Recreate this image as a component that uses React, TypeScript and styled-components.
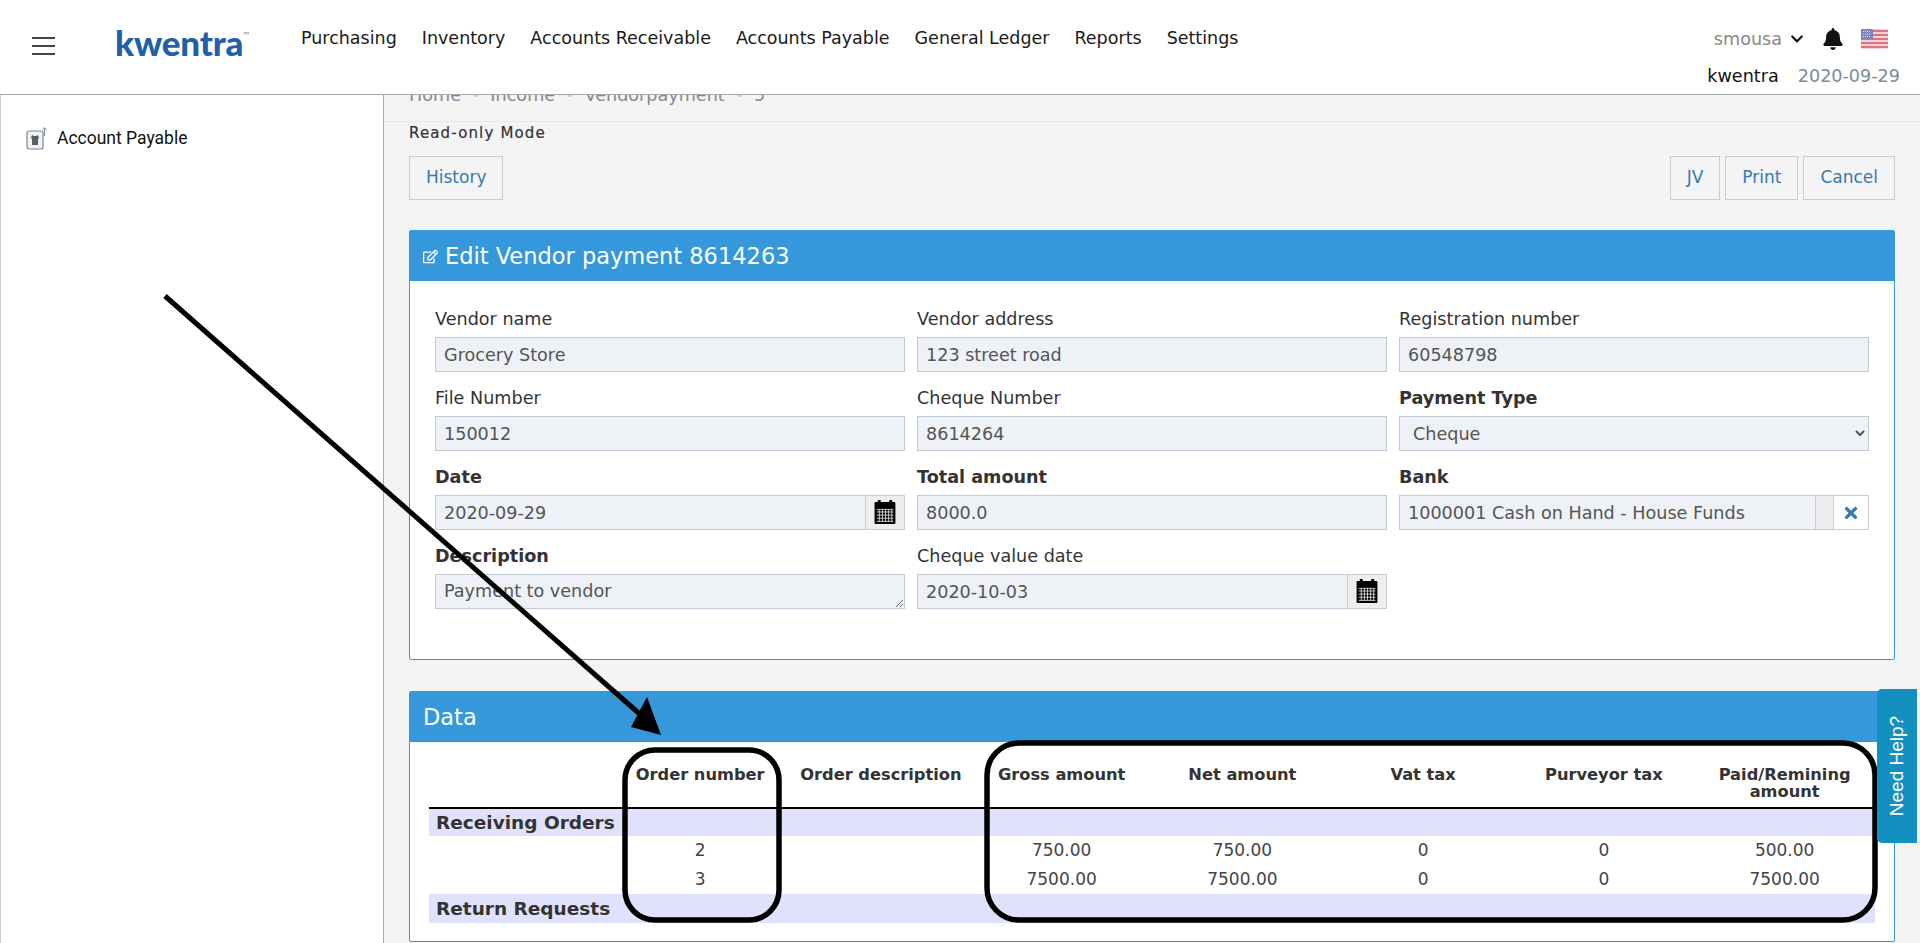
import styled, { createGlobalStyle } from 'styled-components';
import { FaBell, FaChevronDown, FaRegEdit, FaTimes } from 'react-icons/fa';

const NAV_ITEMS = [
  'Purchasing',
  'Inventory',
  'Accounts Receivable',
  'Accounts Payable',
  'General Ledger',
  'Reports',
  'Settings',
];

const COLUMNS = [
  '',
  'Order number',
  'Order description',
  'Gross amount',
  'Net amount',
  'Vat tax',
  'Purveyor tax',
  'Paid/Remining amount',
];

const ORDERS = [
  ['', '2', '', '750.00', '750.00', '0', '0', '500.00'],
  ['', '3', '', '7500.00', '7500.00', '0', '0', '7500.00'],
];

function CalendarIcon() {
  return (
    <svg width="22" height="25" viewBox="0 0 20 24" fill="#000">
      <rect x="0" y="2" width="20" height="21" rx="1" />
      <rect x="3" y="0" width="3" height="4" rx="1" />
      <rect x="14" y="0" width="3" height="4" rx="1" />
      <path
        d="M2 11.5h16M2 14.5h16M2 17.5h16M4.5 9v12M7.5 9v12M10.5 9v12M13.5 9v12M16.5 9v12M2 9h16M2 20.5h16"
        stroke="#e4e4e4"
        strokeWidth="0.8"
      />
    </svg>
  );
}

function PayableIcon() {
  return (
    <svg width="21" height="24" viewBox="0 0 21 24" fill="none">
      <rect x="1" y="5" width="16" height="18" rx="2" fill="#f2f3f6" stroke="#7b8494" strokeWidth="1.2" />
      <path d="M6 9l2 1h2l2-1 1 3-1 1v6H6v-6l-1-1z" fill="#565d6b" />
      <path d="M18.5 10V2M16.5 4l2-2.5L20.5 4" stroke="#8c93a0" strokeWidth="1" />
    </svg>
  );
}

function FlagIcon() {
  return (
    <svg width="27" height="20" viewBox="0 0 27 20">
      <rect width="27" height="20" rx="2" fill="#f3d4d6" />
      <path d="M0 2h27M0 6h27M0 10h27M0 14h27M0 18h27" stroke="#d9747c" strokeWidth="2" />
      <rect width="12" height="10" rx="1" fill="#7f86bd" />
      <path d="M2 2.5h8M2 5h8M2 7.5h8" stroke="#d6d8ec" strokeWidth="1" strokeDasharray="1 1" />
    </svg>
  );
}

function Annotations() {
  return (
    <Overlay width="1920" height="943" viewBox="0 0 1920 943">
      <line x1="165" y1="296" x2="642" y2="716" stroke="#000" strokeWidth="5" />
      <polygon points="661,735 631,727 647,697" fill="#000" />
      <rect x="625" y="750" width="154" height="170" rx="30" fill="none" stroke="#000" strokeWidth="5.5" />
      <rect x="987" y="743" width="888" height="177" rx="32" fill="none" stroke="#000" strokeWidth="5.5" />
    </Overlay>
  );
}

function Field(props: { label: string; strong?: boolean; children: React.ReactNode }) {
  return (
    <FieldBox>
      <FieldLabel $strong={props.strong}>{props.label}</FieldLabel>
      {props.children}
    </FieldBox>
  );
}

function App() {
  return (
    <Page>
      <GlobalStyle />
      <Header>
        <Burger>
          <span />
          <span />
          <span />
        </Burger>
        <Logo>
          kwentra<sup>™</sup>
        </Logo>
        <Nav>
          {NAV_ITEMS.map((item) => (
            <NavLink key={item}>{item}</NavLink>
          ))}
        </Nav>
        <UserArea>
          <UserRow>
            <UserName>smousa</UserName>
            <Chevron>
              <FaChevronDown size={14} />
            </Chevron>
            <Bell>
              <FaBell size={22} />
            </Bell>
            <FlagIcon />
          </UserRow>
          <CompanyRow>
            <Company>kwentra</Company>
            <DateText>2020-09-29</DateText>
          </CompanyRow>
        </UserArea>
      </Header>
      <Body>
        <Sidebar>
          <SideItem>
            <PayableIcon />
            <span>Account Payable</span>
          </SideItem>
        </Sidebar>
        <Main>
          <Breadcrumb>
            <span>Home</span>
            <Dot>•</Dot>
            <span>Income</span>
            <Dot>•</Dot>
            <span>Vendorpayment</span>
            <Dot>•</Dot>
            <span>5</span>
          </Breadcrumb>
          <Content>
            <ReadOnly>Read-only Mode</ReadOnly>
            <Toolbar>
              <LinkButton>History</LinkButton>
              <ToolbarRight>
                <LinkButton>JV</LinkButton>
                <LinkButton>Print</LinkButton>
                <LinkButton>Cancel</LinkButton>
              </ToolbarRight>
            </Toolbar>
            <Panel>
              <PanelHeading>
                <FaRegEdit size={15} />
                Edit Vendor payment 8614263
              </PanelHeading>
              <FormGrid>
                <Field label="Vendor name">
                  <TextInput readOnly value="Grocery Store" />
                </Field>
                <Field label="Vendor address">
                  <TextInput readOnly value="123 street road" />
                </Field>
                <Field label="Registration number">
                  <TextInput readOnly value="60548798" />
                </Field>
                <Field label="File Number">
                  <TextInput readOnly value="150012" />
                </Field>
                <Field label="Cheque Number">
                  <TextInput readOnly value="8614264" />
                </Field>
                <Field label="Payment Type" strong>
                  <SelectInput defaultValue="Cheque">
                    <option>Cheque</option>
                  </SelectInput>
                </Field>
                <Field label="Date" strong>
                  <InputGroup>
                    <TextInput readOnly value="2020-09-29" />
                    <Addon>
                      <CalendarIcon />
                    </Addon>
                  </InputGroup>
                </Field>
                <Field label="Total amount" strong>
                  <TextInput readOnly value="8000.0" />
                </Field>
                <Field label="Bank" strong>
                  <InputGroup>
                    <TextInput readOnly value="1000001 Cash on Hand - House Funds" />
                    <BankSpacer />
                    <ClearAddon>
                      <FaTimes size={18} />
                    </ClearAddon>
                  </InputGroup>
                </Field>
                <Field label="Description" strong>
                  <TextArea readOnly defaultValue="Payment to vendor" />
                </Field>
                <Field label="Cheque value date">
                  <InputGroup>
                    <TextInput readOnly value="2020-10-03" />
                    <Addon>
                      <CalendarIcon />
                    </Addon>
                  </InputGroup>
                </Field>
              </FormGrid>
            </Panel>
            <DataPanel>
              <PanelHeading>Data</PanelHeading>
              <TableWrap>
                <DataTable>
                  <thead>
                    <tr>
                      {COLUMNS.map((col, i) => (
                        <th key={i}>{col}</th>
                      ))}
                    </tr>
                  </thead>
                  <tbody>
                    <SectionRow>
                      <td colSpan={8}>Receiving Orders</td>
                    </SectionRow>
                    {ORDERS.map((row) => (
                      <tr key={row[1]}>
                        {row.map((cell, i) => (
                          <td key={i}>{cell}</td>
                        ))}
                      </tr>
                    ))}
                    <SectionRow>
                      <td colSpan={8}>Return Requests</td>
                    </SectionRow>
                  </tbody>
                </DataTable>
              </TableWrap>
            </DataPanel>
          </Content>
        </Main>
      </Body>
      <Annotations />
      <HelpTab>
        <span>Need Help?</span>
      </HelpTab>
    </Page>
  );
}

var GlobalStyle = createGlobalStyle`
  html, body {
    margin: 0;
    padding: 0;
    overflow: hidden;
  }
  * {
    box-sizing: border-box;
  }
  body {
    font-family: "DejaVu Sans", sans-serif;
    font-size: 17.6px;
    color: #333;
    background: #f4f4f4;
  }
`;

var Page = styled.div`
  position: relative;
  width: 1920px;
  height: 943px;
  overflow: hidden;
`;

var Overlay = styled.svg`
  position: absolute;
  top: 0;
  left: 0;
  pointer-events: none;
`;

var Header = styled.header`
  display: flex;
  align-items: flex-start;
  height: 95px;
  background: #fff;
  border-bottom: 1px solid #aaa;
  position: relative;
  z-index: 1;
`;

var Burger = styled.div`
  display: flex;
  flex-direction: column;
  gap: 6px;
  width: 23px;
  margin: 37px 0 0 32px;
  span {
    display: block;
    height: 2px;
    background: #444;
  }
`;

var Logo = styled.div`
  width: 186px;
  margin: 22px 0 0 60px;
  font-family: Lato, sans-serif;
  font-weight: 900;
  font-size: 35px;
  line-height: 40px;
  letter-spacing: -0.2px;
  color: #2060a8;
  sup {
    font-size: 8px;
    font-weight: 400;
    color: #889;
    vertical-align: 18px;
    line-height: 0;
  }
`;

var Nav = styled.nav`
  display: flex;
  gap: 25px;
  margin-top: 28px;
`;

var NavLink = styled.a`
  font-size: 17.5px;
  line-height: 20px;
  color: #1a1a1a;
`;

var UserArea = styled.div`
  margin-left: auto;
  padding: 26px 20px 0 0;
  display: flex;
  flex-direction: column;
  align-items: flex-end;
`;

var UserRow = styled.div`
  display: flex;
  align-items: center;
  height: 26px;
  padding-right: 12px;
`;

var UserName = styled.span`
  color: #888;
  margin-right: 8px;
`;

var Chevron = styled.span`
  display: flex;
  color: #111;
  margin-right: 18px;
`;

var Bell = styled.span`
  display: flex;
  color: #111;
  margin-right: 17px;
`;

var CompanyRow = styled.div`
  display: flex;
  gap: 19px;
  margin-top: 14px;
  line-height: 20px;
`;

var Company = styled.span`
  color: #111;
`;

var DateText = styled.span`
  color: #7d8c99;
`;

var Body = styled.div`
  display: flex;
  height: 848px;
`;

var Sidebar = styled.aside`
  width: 384px;
  flex: none;
  background: #fff;
  border-right: 1px solid #aaa;
  border-left: 1px solid #ccc;
  padding: 31px 0 0 25px;
`;

var SideItem = styled.div`
  display: flex;
  align-items: center;
  gap: 10px;
  font-family: Roboto, sans-serif;
  font-size: 17.5px;
  color: #111;
`;

var Main = styled.main`
  flex: 1;
  min-width: 0;
  overflow: hidden;
`;

var Breadcrumb = styled.div`
  display: flex;
  gap: 9.5px;
  height: 37px;
  margin-top: -10px;
  padding-left: 25px;
  border-bottom: 1px solid #e8e8ee;
  line-height: 20px;
  color: #888;
`;

var Dot = styled.span`
  color: #ccc;
`;

var Content = styled.div`
  padding: 0 25px 0 25px;
`;

var ReadOnly = styled.div`
  margin-top: 2px;
  font-size: 15px;
  line-height: 18px;
  letter-spacing: 1.15px;
  -webkit-text-stroke: 0.2px #333;
`;

var Toolbar = styled.div`
  display: flex;
  justify-content: space-between;
  margin-top: 14px;
`;

var ToolbarRight = styled.div`
  display: flex;
  gap: 5px;
`;

var LinkButton = styled.button`
  height: 44px;
  padding: 0 16px 2px;
  background: transparent;
  border: 1px solid #ccc;
  font-family: inherit;
  font-size: 17px;
  color: #337ab7;
`;

var Panel = styled.section`
  margin-top: 30px;
  background: #fff;
  border: 1px solid #3498db;
  border-radius: 2px;
  height: 430px;
`;

var DataPanel = styled(Panel)`
  height: 251px;
  margin-top: 31px;
`;

var PanelHeading = styled.h3`
  display: flex;
  align-items: center;
  gap: 7px;
  height: 50px;
  margin: 0;
  padding: 0 13px;
  background: #3498db;
  color: #fff;
  font-size: 22.5px;
  font-weight: 400;
`;

var FormGrid = styled.div`
  display: grid;
  grid-template-columns: repeat(3, 470px);
  column-gap: 12px;
  row-gap: 17px;
  padding: 29px 25px 0;
`;

var FieldBox = styled.div`
  display: flex;
  flex-direction: column;
  min-width: 0;
`;

var FieldLabel = styled.label<{ $strong?: boolean }>`
  height: 27px;
  padding-bottom: 9px;
  line-height: 18px;
  font-weight: ${(p) => (p.$strong ? 700 : 400)};
  color: #333;
`;

var TextInput = styled.input`
  flex: none;
  width: 100%;
  min-width: 0;
  height: 35px;
  padding: 0 8px;
  background: #eef1f5;
  border: 1px solid #c2cad8;
  font-family: inherit;
  font-size: 17.6px;
  color: #555;
  outline: none;
`;

var SelectInput = styled.select`
  width: 100%;
  height: 35px;
  padding: 0 9px;
  background: #eef1f5;
  border: 1px solid #c2cad8;
  font-family: inherit;
  font-size: 17.6px;
  color: #555;
`;

var TextArea = styled.textarea`
  width: 100%;
  height: 35px;
  padding: 6px 8px;
  background: #eef1f5;
  border: 1px solid #c2cad8;
  font-family: inherit;
  font-size: 17.6px;
  color: #555;
  outline: none;
`;

var InputGroup = styled.div`
  display: flex;
  height: 35px;
  input {
    flex: 1;
    width: auto;
  }
`;

var Addon = styled.span`
  display: flex;
  align-items: center;
  justify-content: center;
  flex: none;
  width: 39px;
  background: #eee;
  border: 1px solid #ccc;
  border-left: none;
`;

var BankSpacer = styled.span`
  flex: none;
  width: 18px;
  background: #eee;
  border: 1px solid #ccc;
  border-left: none;
`;

var ClearAddon = styled(Addon)`
  width: 35px;
  background: #fff;
  color: #337ab7;
`;

var TableWrap = styled.div`
  padding: 11px 19px 0;
`;

var DataTable = styled.table`
  width: 100%;
  table-layout: fixed;
  border-collapse: collapse;
  text-align: center;
  font-size: 17px;
  th {
    height: 55px;
    padding: 13px 0 0;
    vertical-align: top;
    font-size: 16.25px;
    font-weight: 700;
    line-height: 17px;
    border-bottom: 2px solid #000;
    color: #333;
  }
  td {
    height: 28px;
    padding: 0;
    color: #444;
  }
  tbody tr:nth-child(3) td {
    height: 30px;
  }
  tbody tr:nth-child(4) td {
    height: 29px;
  }
`;

var SectionRow = styled.tr`
  background: #e0e2fd;
  td {
    padding-left: 7px;
    text-align: left;
    font-size: 18.5px;
    font-weight: 700;
    color: #333;
  }
`;

var HelpTab = styled.div`
  position: fixed;
  top: 689px;
  right: 3px;
  width: 40px;
  height: 154px;
  display: flex;
  align-items: center;
  justify-content: center;
  background: #1490c0;
  border-radius: 5px 0 0 5px;
  span {
    transform: rotate(-90deg);
    white-space: nowrap;
    font-family: "Liberation Sans", sans-serif;
    font-size: 19px;
    color: #fff;
  }
`;

export default App;
